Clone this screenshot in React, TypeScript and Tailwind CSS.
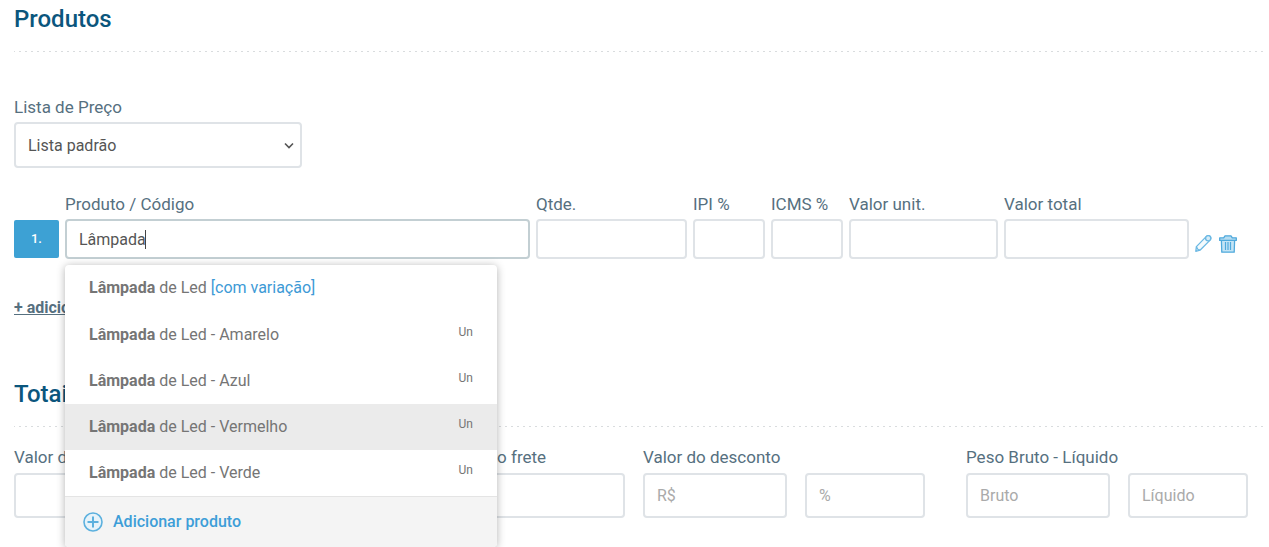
import { useState } from "react";

const PRODUCTS = [
  { name: "Amarelo", unit: "Un" },
  { name: "Azul", unit: "Un" },
  { name: "Vermelho", unit: "Un" },
  { name: "Verde", unit: "Un" },
];

const LABEL = "block text-[17px] leading-6 text-[#56707f] whitespace-nowrap";
const INPUT =
  "block w-full min-w-0 rounded border-2 border-[#dfe3e7] bg-white px-3 text-base text-[#555] outline-none placeholder:text-[#aaa] focus:border-[#c3cfd3]";

function SectionTitle({ children }: { children: React.ReactNode }) {
  return (
    <>
      <h2 className="text-2xl leading-8 font-medium text-[#0b567d]">{children}</h2>
      <div className="mt-4 h-px bg-[repeating-linear-gradient(to_right,#d9dcde_0_1px,transparent_1px_5px,#d9dcde_5px_6px)]" />
    </>
  );
}

function Field({ id, label }: { id: string; label: string }) {
  return (
    <div className="min-w-0">
      <label htmlFor={id} className={LABEL}>{label}</label>
      <input id={id} className={`${INPUT} mt-[3px] h-10`} />
    </div>
  );
}

function PencilIcon() {
  return (
    <svg width="18" height="18" viewBox="0 0 18 18" fill="none" stroke="#6bb8e3" strokeWidth="1.3" strokeLinejoin="round">
      <path d="M.8 16.4 1.4 11.6 11.4 1.4a2.6 2.6 0 0 1 3.7 3.7L5 15.2z" fill="#f3fafd" />
      <path d="M1.4 11.6c.5 2 1.6 3.2 3.6 3.6" />
      <circle cx="13.2" cy="3.3" r="2.6" fill="#d5ecf8" />
    </svg>
  );
}

function TrashIcon() {
  return (
    <svg width="18" height="18" viewBox="0 0 18 18" fill="none" stroke="#4fa9dc" strokeWidth="1.3" strokeLinejoin="round">
      <path d="M2.4 5.4 2.8 17.2h12.4l.4-11.8" fill="#c4e4f5" />
      <path d="M.7 5.4V2.8h4L6 .8h6l1.3 2h4v2.6z" fill="#b5ddf2" />
      <path d="M6.5 7v8M9 7v8M11.5 7v8" strokeWidth="1.2" />
    </svg>
  );
}

function PlusIcon() {
  return (
    <svg width="20" height="20" viewBox="0 0 20 20" fill="none" stroke="#5bb0de">
      <circle cx="10" cy="10" r="9" strokeWidth="1.6" fill="#e6f3fa" />
      <path d="M10 4.5v11M4.5 10h11" strokeWidth="2" />
    </svg>
  );
}

function Suggestions() {
  return (
    <div className="absolute top-full left-0 z-10 mt-1.5 w-[432px] overflow-hidden rounded bg-white text-base text-[#757575] shadow-[0_1px_8px_rgba(0,0,0,0.3)]">
      <ul>
        <li className="border-b border-white">
          <button type="button" className="block h-[46px] w-full px-6 text-left">
            <b>Lâmpada</b> de Led <span className="text-[#3d9ad6]">[com variação]</span>
          </button>
        </li>
        {PRODUCTS.map((p) => (
          <li key={p.name}>
            <button
              type="button"
              className={`flex h-[46px] w-full items-center justify-between px-6 text-left ${
                p.name === "Vermelho" ? "bg-[#ebebeb]" : ""
              }`}
            >
              <span>
                <b>Lâmpada</b> de Led - {p.name}
              </span>
              <span className="pb-1.5 text-xs">{p.unit}</span>
            </button>
          </li>
        ))}
      </ul>
      <button
        type="button"
        className="flex h-[51px] w-full items-center gap-2.5 border-t border-[#e4e4e4] bg-[#f4f4f4] px-[18px] font-medium text-[#3d9ed8]"
      >
        <PlusIcon />
        Adicionar produto
      </button>
    </div>
  );
}

export default function App() {
  const [product, setProduct] = useState("Lâmpada");

  return (
    <main className="min-h-screen bg-white pt-[3px] pr-0.5 pl-3.5 font-[Roboto,sans-serif]">
      <section>
        <SectionTitle>Produtos</SectionTitle>

        <div className="mt-[43px] w-72">
          <label htmlFor="lista" className={LABEL}>Lista de Preço</label>
          <div className="relative mt-[3px]">
            <select id="lista" className={`${INPUT} h-[46px] appearance-none pt-0.5`}>
              <option>Lista padrão</option>
            </select>
            <svg className="pointer-events-none absolute top-5 right-2" width="10" height="8" viewBox="0 0 10 8" fill="none" stroke="#555" strokeWidth="1.6">
              <path d="m1 1.5 4 4 4-4" />
            </svg>
          </div>
        </div>

        <div className="mt-6 grid grid-cols-[45px_465fr_151fr_72fr_72fr_149fr_185fr_72px] items-end gap-1.5">
          <div className="mb-px flex h-[38px] items-center justify-center rounded-xs bg-[#3da1d4] text-[13px] font-medium text-white">
            1.
          </div>
          <div className="relative min-w-0">
            <label htmlFor="produto" className={LABEL}>Produto / Código</label>
            <input
              id="produto"
              autoFocus
              autoComplete="off"
              value={product}
              onChange={(e) => setProduct(e.target.value)}
              className={`${INPUT} mt-[3px] h-10 caret-transparent`}
            />
            {product === "Lâmpada" && (
              <span className="pointer-events-none absolute bottom-2.5 left-20 h-[19px] w-px bg-[#444]" />
            )}
            <Suggestions />
          </div>
          <Field id="qtde" label="Qtde." />
          <Field id="ipi" label="IPI %" />
          <Field id="icms" label="ICMS %" />
          <Field id="unit" label="Valor unit." />
          <Field id="total" label="Valor total" />
          <div className="flex gap-1.5 pb-1.5">
            <button type="button" aria-label="Editar"><PencilIcon /></button>
            <button type="button" aria-label="Excluir"><TrashIcon /></button>
          </div>
        </div>

        <a href="#" className="mt-[37px] inline-block text-base leading-6 font-bold text-[#56707f] underline">
          + adicionar
        </a>
      </section>

      <section className="mt-[58px]">
        <SectionTitle>Totais</SectionTitle>

        <div className="mt-[18px] grid grid-cols-[412fr_181fr_282fr_305fr] gap-x-[18px] pr-[19px]">
          <div className="min-w-0">
            <label htmlFor="produtos" className={LABEL}>Valor dos produtos</label>
            <input id="produtos" className={`${INPUT} mt-1 h-[45px]`} />
          </div>
          <div className="min-w-0">
            <label htmlFor="frete" className={LABEL}>Valor do frete</label>
            <input id="frete" className={`${INPUT} mt-1 h-[45px]`} />
          </div>
          <div className="min-w-0">
            <label htmlFor="desconto" className={LABEL}>Valor do desconto</label>
            <div className="mt-1 grid grid-cols-[144fr_120fr] gap-[18px]">
              <input id="desconto" placeholder="R$" className={`${INPUT} h-[45px]`} />
              <input aria-label="Desconto em porcentagem" placeholder="%" className={`${INPUT} h-[45px]`} />
            </div>
          </div>
          <div className="min-w-0 pl-[23px]">
            <label htmlFor="bruto" className={LABEL}>Peso Bruto - Líquido</label>
            <div className="mt-1 grid grid-cols-[144fr_120fr] gap-[18px]">
              <input id="bruto" placeholder="Bruto" className={`${INPUT} h-[45px]`} />
              <input aria-label="Peso líquido" placeholder="Líquido" className={`${INPUT} h-[45px]`} />
            </div>
          </div>
        </div>
      </section>
    </main>
  );
}
